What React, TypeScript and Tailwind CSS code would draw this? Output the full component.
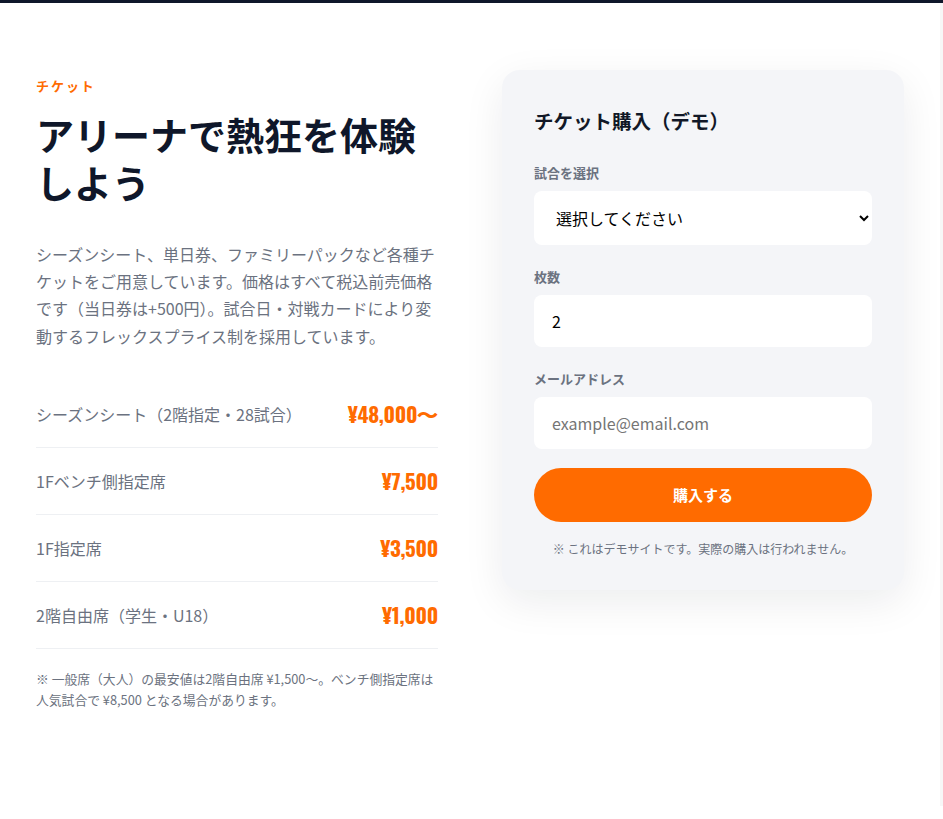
import { useState } from "react"

const prices = [
  { label: "シーズンシート（2階指定・28試合）", price: "¥48,000〜" },
  { label: "1Fベンチ側指定席", price: "¥7,500" },
  { label: "1F指定席", price: "¥3,500" },
  { label: "2階自由席（学生・U18）", price: "¥1,000" },
]

export default function App() {
  const [match, setMatch] = useState("")
  const [count, setCount] = useState("2")
  const [email, setEmail] = useState("")

  return (
    <div className="min-h-screen bg-white font-['Noto_Sans_CJK_JP','Noto_Sans',sans-serif] text-[#0f172a]">
      {/* header edge */}
      <div className="h-[3px] bg-[#0f172a]" />

      <div className="flex">
        <main className="w-[940px] px-9 pt-[67px] pb-24">
          <div className="grid grid-cols-2 gap-16 items-start">
            {/* left: pricing */}
            <section>
              <p className="mt-1.5 text-[13px] leading-5 font-bold tracking-[0.15em] text-[#ff6b00]">チケット</p>
              <h2 className="mt-[14px] text-[38px] leading-[48px] font-bold text-[#0f172a]">
                アリーナで熱狂を体験しよう
              </h2>
              <p className="mt-[35px] text-base leading-[27.2px] text-[#6b7280]">
                シーズンシート、単日券、ファミリーパックなど各種チケットをご用意しています。価格はすべて税込前売価格です（当日券は+500円）。試合日・対戦カードにより変動するフレックスプライス制を採用しています。
              </p>

              <ul className="mt-[31px]">
                {prices.map((p) => (
                  <li
                    key={p.label}
                    className="flex items-center justify-between h-[67px] border-b border-[#eef0f3]"
                  >
                    <span className="text-base text-[#6b7280]">{p.label}</span>
                    <span className="font-['Oswald','Liberation_Sans_Narrow','DejaVu_Sans_Condensed',sans-serif] text-[21px] tracking-[-0.3px] font-bold text-[#ff6b00]">
                      {p.price}
                    </span>
                  </li>
                ))}
              </ul>

              <p className="mt-5 text-[12.8px] leading-[20.8px] text-[#6b7280]">
                ※ 一般席（大人）の最安値は2階自由席 ¥1,500〜。ベンチ側指定席は人気試合で ¥8,500 となる場合があります。
              </p>
            </section>

            {/* right: purchase form */}
            <section className="rounded-[18px] bg-[#f4f5f8] px-8 pt-9 pb-[31px] shadow-[0_12px_40px_rgba(15,23,42,0.08)]">
              <h3 className="text-[19.5px] leading-[30px] font-bold text-[#111827] mb-[27px]">チケット購入（デモ）</h3>

              <form className="flex flex-col gap-[22px]" onSubmit={(e) => e.preventDefault()}>
                <div>
                  <label className="block mb-2 text-[13px] leading-5 font-semibold text-[#6b7280]">試合を選択</label>
                  <select
                    value={match}
                    onChange={(e) => setMatch(e.target.value)}
                    className="w-full h-[54px] rounded-lg bg-white pl-[18px] pr-3 text-base text-black outline-none"
                  >
                    <option value="">選択してください</option>
                    <option value="1">10/12 vs 東京</option>
                    <option value="2">10/19 vs 大阪</option>
                  </select>
                </div>

                <div>
                  <label className="block mb-2 text-[13px] leading-5 font-semibold text-[#6b7280]">枚数</label>
                  <input
                    type="number"
                    value={count}
                    onChange={(e) => setCount(e.target.value)}
                    className="w-full h-[52px] rounded-lg bg-white px-[18px] text-base text-black outline-none"
                  />
                </div>

                <div>
                  <label className="block mb-2 text-[13px] leading-5 font-semibold text-[#6b7280]">メールアドレス</label>
                  <input
                    type="email"
                    value={email}
                    onChange={(e) => setEmail(e.target.value)}
                    placeholder="example@email.com"
                    className="w-full h-[52px] rounded-lg bg-white px-[18px] text-base text-black placeholder:text-[#757575] outline-none"
                  />
                </div>

                <button
                  type="submit"
                  className="mt-[-3px] h-[54px] rounded-full bg-[#ff6b00] text-[15px] font-bold text-white"
                >
                  購入する
                </button>
              </form>

              <p className="mt-[17px] text-center text-xs leading-5 text-[#6b7280]">
                ※ これはデモサイトです。実際の購入は行われません。
              </p>
            </section>
          </div>
        </main>
        <div className="w-[3px] bg-[#f7f7f7]" />
      </div>
    </div>
  )
}
